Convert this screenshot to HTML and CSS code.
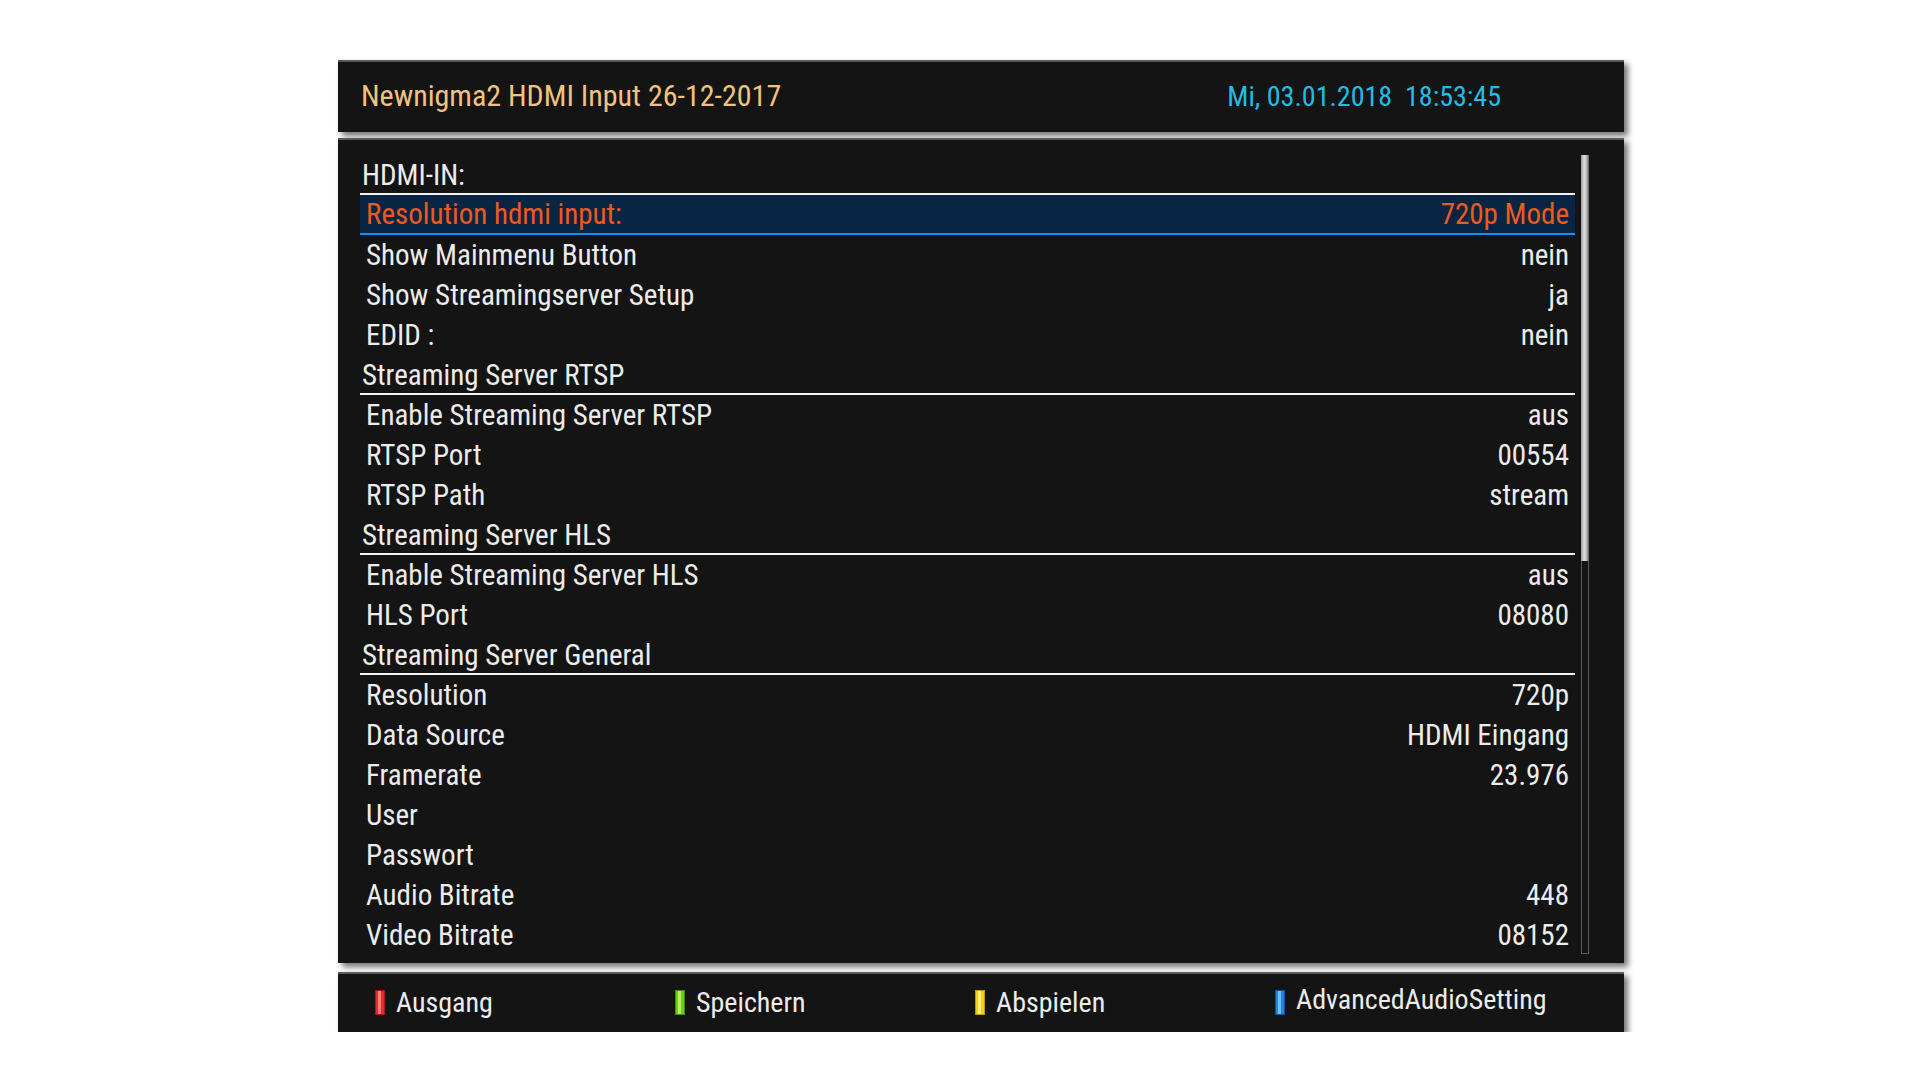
FILE: index.html
```html
<!DOCTYPE html>
<html lang="de">

<head>
    <meta charset="UTF-8" />
    <title>Newnigma2 HDMI Input</title>
    <link rel="stylesheet" href="styles.css">
</head>

<body>

    <div class="screen">
        <header class="box title-bar">
            <span class="title">Newnigma2 HDMI Input 26-12-2017</span>
            <span class="clock">Mi, 03.01.2018&nbsp; 18:53:45</span>
        </header>

        <main class="box config">
            <ul class="list">
                <li class="section">HDMI-IN:</li>
                <li class="item selected"><span>Resolution hdmi input:</span><span>720p Mode</span></li>
                <li class="item"><span>Show Mainmenu Button</span><span>nein</span></li>
                <li class="item"><span>Show Streamingserver Setup</span><span>ja</span></li>
                <li class="item"><span>EDID :</span><span>nein</span></li>
                <li class="section">Streaming Server RTSP</li>
                <li class="item"><span>Enable Streaming Server RTSP</span><span>aus</span></li>
                <li class="item"><span>RTSP Port</span><span>00554</span></li>
                <li class="item"><span>RTSP Path</span><span>stream</span></li>
                <li class="section">Streaming Server HLS</li>
                <li class="item"><span>Enable Streaming Server HLS</span><span>aus</span></li>
                <li class="item"><span>HLS Port</span><span>08080</span></li>
                <li class="section">Streaming Server General</li>
                <li class="item"><span>Resolution</span><span>720p</span></li>
                <li class="item"><span>Data Source</span><span>HDMI Eingang</span></li>
                <li class="item"><span>Framerate</span><span>23.976</span></li>
                <li class="item"><span>User</span><span></span></li>
                <li class="item"><span>Passwort</span><span></span></li>
                <li class="item"><span>Audio Bitrate</span><span>448</span></li>
                <li class="item"><span>Video Bitrate</span><span>08152</span></li>
            </ul>
            <div class="scrollbar">
                <div class="thumb"></div>
            </div>
        </main>

        <footer class="box keys">
            <div class="key-item"><span class="key red"></span>Ausgang</div>
            <div class="key-item"><span class="key green"></span>Speichern</div>
            <div class="key-item"><span class="key yellow"></span>Abspielen</div>
            <div class="key-item raised"><span class="key blue"></span>AdvancedAudioSetting</div>
        </footer>
    </div>

</body>

</html>
```

FILE: styles.css
```css
:root {
    --panel: #141414;
    --edge: #5a5a5a;
    --text: #ececec;
    --title: #f2c27e;
    --clock: #1fbde6;
    --select-bg: #0a2444;
    --select-line: #1b8cf0;
    --select-text: #ef5a1c;
}

body {
    margin: 0;
    background: #ffffff;
    font-family: "Roboto Condensed", "Liberation Sans Narrow", Roboto, sans-serif;
    font-stretch: condensed;
    color: var(--text);
}

.screen {
    width: 1286px;
    margin: 60px 0 0 338px;
    display: flex;
    flex-direction: column;
}

.box {
    box-sizing: border-box;
    background: var(--panel);
    border-top: 2px solid var(--edge);
    box-shadow: 4px 4px 6px rgba(0, 0, 0, 0.55);
}

.title-bar {
    height: 72px;
    display: flex;
    justify-content: space-between;
    align-items: baseline;
    padding: 16px 123px 0 23px;
}

.title {
    color: var(--title);
    font-size: 30px;
}

.clock {
    color: var(--clock);
    font-size: 28px;
}

.config {
    margin-top: 6px;
    height: 825px;
    display: flex;
    padding: 15px 35px 0 22px;
}

.list {
    list-style: none;
    margin: 0;
    padding: 0;
    flex: 1;
    font-size: 29px;
}

.list li {
    box-sizing: border-box;
    height: 40px;
    display: flex;
    justify-content: space-between;
    align-items: center;
}

.section {
    padding: 2px 0 0 2px;
    border-bottom: 2px solid #f4f4f4;
}

.item {
    padding: 0 6px;
}

.item.selected {
    background: var(--select-bg);
    border-bottom: 2px solid var(--select-line);
    color: var(--select-text);
}

.scrollbar {
    box-sizing: border-box;
    width: 8px;
    height: 799px;
    margin-left: 6px;
    border: 1px solid #5c5c5c;
}

.thumb {
    height: 406px;
    margin: -1px;
    background: linear-gradient(90deg, #9a9a9a, #e0e0e0 40%, #b8b8b8 70%, #5e5e5e);
}

.keys {
    margin-top: 9px;
    height: 60px;
    display: flex;
    align-items: center;
    padding: 0 0 2px 37px;
    font-size: 28px;
}

.key-item {
    width: 300px;
    display: flex;
    align-items: center;
    gap: 11px;
}

.key-item.raised {
    margin-top: -5px;
}

.key-item.raised .key {
    margin-top: 5px;
}

.key {
    box-sizing: border-box;
    width: 10px;
    height: 25px;
    border: 1px solid;
}

.key.red {
    border-color: #a8141a;
    background: linear-gradient(90deg, #e42a2a 0 30%, #ff7a7a 30% 62%, #e42a2a 62%);
}

.key.green {
    border-color: #3f8a0e;
    background: linear-gradient(90deg, #6fcc12 0 30%, #b6f35e 30% 62%, #6fcc12 62%);
}

.key.yellow {
    border-color: #c29a00;
    background: linear-gradient(90deg, #f2d10e 0 30%, #fff27a 30% 62%, #f2d10e 62%);
}

.key.blue {
    border-color: #0e4fa6;
    background: linear-gradient(90deg, #1f82e6 0 30%, #6cc0ff 30% 62%, #1f82e6 62%);
}
```
